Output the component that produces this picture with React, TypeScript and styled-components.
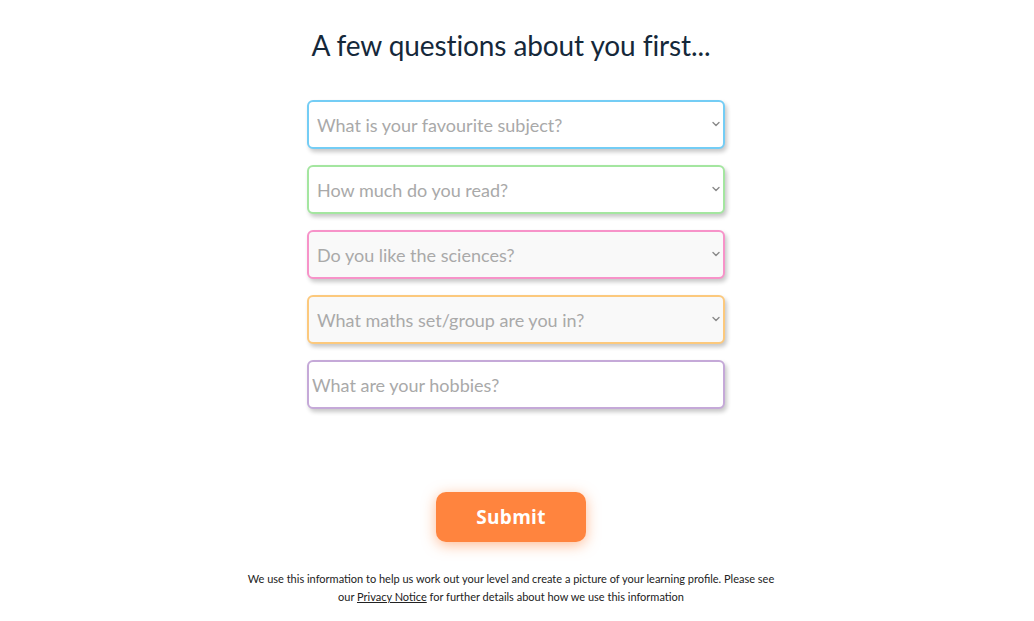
import styled, { createGlobalStyle } from "styled-components"

const GlobalStyle = createGlobalStyle`
  html, body {
    margin: 0;
    padding: 0;
    background: #ffffff;
  }
  * { box-sizing: border-box; }
`

const StyledPage = styled.main`
  display: flex;
  flex-direction: column;
  align-items: center;
  padding: 27px 12px 0 0;
  font-family: Lato, "Noto Sans", sans-serif;
`

const StyledTitle = styled.h1`
  margin: 0;
  font-family: Lato, "Noto Sans", sans-serif;
  font-size: 28px;
  font-weight: 400;
  line-height: 36px;
  color: #15283a;
  letter-spacing: -0.1px;
`

const StyledForm = styled.form`
  display: flex;
  flex-direction: column;
  align-items: center;
  margin-top: 37px;
`

const StyledFields = styled.div`
  display: flex;
  flex-direction: column;
  gap: 16px;
  width: 418px;
  margin-left: 10px;
`

const StyledField = styled.div`
  position: relative;
  svg {
    position: absolute;
    right: 4px;
    top: 19px;
    pointer-events: none;
  }
`

const StyledSelect = styled.select<{ $color: string; $bg: string }>`
  appearance: none;
  width: 100%;
  height: 49px;
  padding: 0 24px 0 8px;
  border: 2px solid ${p => p.$color};
  border-radius: 6px;
  background: ${p => p.$bg};
  box-shadow: 2px 3px 4px rgba(0, 0, 0, 0.22);
  font-family: Lato, "Noto Sans", sans-serif;
  font-size: 18px;
  color: #a9a9a9;
  outline: none;
`

const StyledInput = styled.input<{ $color: string }>`
  width: 100%;
  height: 49px;
  padding: 0 3px;
  border: 2px solid ${p => p.$color};
  border-radius: 6px;
  background: #ffffff;
  box-shadow: 2px 3px 4px rgba(0, 0, 0, 0.22);
  font-family: Lato, "Noto Sans", sans-serif;
  font-size: 18px;
  color: #333;
  outline: none;
  &::placeholder { color: #a9a9a9; }
`

const StyledButton = styled.button`
  margin-top: 83px;
  width: 150px;
  height: 50px;
  border: none;
  border-radius: 10px;
  background: #ff843e;
  box-shadow: 0 3px 14px rgba(255, 132, 62, 0.55);
  color: #ffffff;
  font-family: "Open Sans", Lato, sans-serif;
  font-size: 19px;
  font-weight: 700;
  letter-spacing: 0.3px;
  cursor: pointer;
`

const StyledNotice = styled.p`
  margin: 28px 0 0;
  max-width: 530px;
  text-align: center;
  font-family: Lato, "Noto Sans", sans-serif;
  font-size: 11px;
  line-height: 18px;
  color: #222;
  a { color: #222; }
`

const Chevron = () => (
  <svg width="10" height="10" viewBox="0 0 10 10" fill="none">
    <path d="M2 3.5 L5 6.5 L8 3.5" stroke="#8a8a8a" strokeWidth="1.4" strokeLinecap="round" strokeLinejoin="round" />
  </svg>
)

const questions = [
  { label: "What is your favourite subject?", color: "#74cdf5", bg: "#ffffff" },
  { label: "How much do you read?", color: "#a4e6a0", bg: "#ffffff" },
  { label: "Do you like the sciences?", color: "#f793c9", bg: "#f9f9f9" },
  { label: "What maths set/group are you in?", color: "#fcc97d", bg: "#f9f9f9" },
]

export default function App(){
  return <>
    <GlobalStyle />
    <StyledPage>
      <StyledTitle>A few questions about you first...</StyledTitle>

      <StyledForm onSubmit={e => e.preventDefault()}>
        <StyledFields>
          {questions.map(q => (
            <StyledField key={q.label}>
              <StyledSelect $color={q.color} $bg={q.bg} defaultValue="">
                <option value="" disabled>{q.label}</option>
              </StyledSelect>
              <Chevron />
            </StyledField>
          ))}
          <StyledInput $color="#c5a9d8" placeholder="What are your hobbies?" />
        </StyledFields>

        <StyledButton type="submit">Submit</StyledButton>
      </StyledForm>

      <StyledNotice>
        We use this information to help us work out your level and create a picture of your learning profile. Please see
        our <a href="#">Privacy Notice</a> for further details about how we use this information
      </StyledNotice>
    </StyledPage>
  </>
}
